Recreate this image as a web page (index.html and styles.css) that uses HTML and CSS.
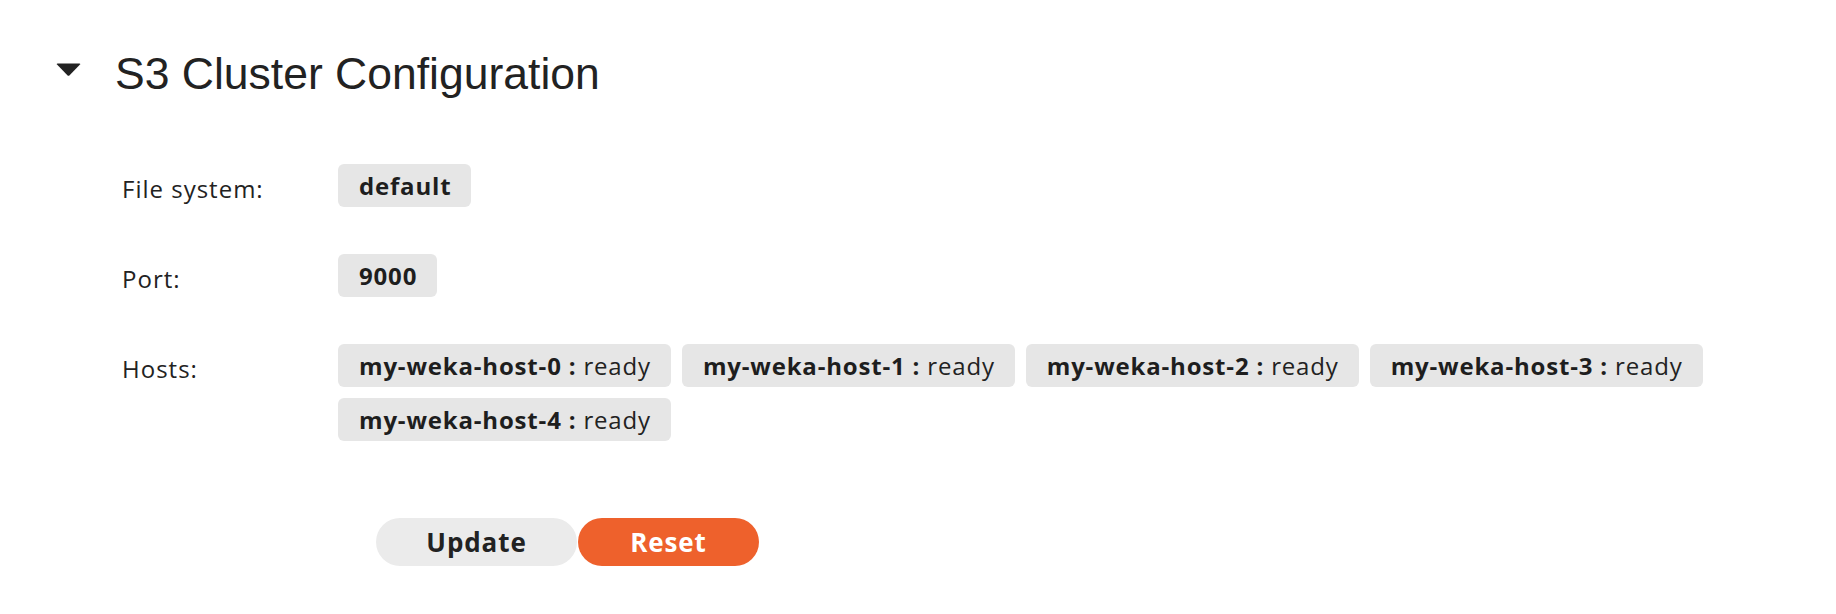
FILE: index.html
```html
<!DOCTYPE html>
<html lang="en">
<head>
<meta charset="utf-8">
<title>S3 Cluster Configuration</title>
<link rel="stylesheet" href="styles.css">
</head>
<body>
<section class="panel">
  <div class="panel-header">
    <svg class="caret" viewBox="0 0 25 13" aria-hidden="true"><path d="M1.5 0.5 H23.5 Q25 0.5 24 1.6 L13.6 12.2 Q12.5 13.2 11.4 12.2 L1 1.6 Q0 0.5 1.5 0.5 Z"/></svg>
    <h2 class="panel-title">S3 Cluster Configuration</h2>
  </div>
  <dl class="config">
    <div class="config-row">
      <dt>File system:</dt>
      <dd><span class="tag"><b>default</b></span></dd>
    </div>
    <div class="config-row">
      <dt>Port:</dt>
      <dd><span class="tag"><b>9000</b></span></dd>
    </div>
    <div class="config-row">
      <dt>Hosts:</dt>
      <dd>
        <span class="tag"><b>my-weka-host-0 :</b> ready</span>
        <span class="tag"><b>my-weka-host-1 :</b> ready</span>
        <span class="tag"><b>my-weka-host-2 :</b> ready</span>
        <span class="tag"><b>my-weka-host-3 :</b> ready</span>
        <span class="tag"><b>my-weka-host-4 :</b> ready</span>
      </dd>
    </div>
  </dl>
  <div class="actions">
    <button class="btn btn-secondary" type="button">Update</button>
    <button class="btn btn-primary" type="button">Reset</button>
  </div>
</section>
</body>
</html>
```
FILE: styles.css
```css
html, body {
  margin: 0;
  background: #ffffff;
}

body {
  font-family: "Open Sans", "Noto Sans", sans-serif;
  color: #222222;
}

.panel {
  padding: 52px 0 40px 56px;
}

.panel-header {
  display: flex;
  align-items: flex-start;
  gap: 34px;
}

.caret {
  width: 25px;
  height: 13px;
  margin-top: 11px;
  fill: #222222;
  flex: none;
}

.panel-title {
  margin: 0;
  font-family: "Liberation Sans", Arial, sans-serif;
  font-weight: 400;
  font-size: 44.5px;
  line-height: 44px;
  color: #222222;
}

.config {
  margin: 68px 0 0;
  padding-left: 66px;
  display: flex;
  flex-direction: column;
  gap: 47px;
}

.config-row {
  display: grid;
  grid-template-columns: 216px 1fr;
}

.config-row dt {
  font-size: 24px;
  line-height: 37px;
  padding-top: 6px;
  letter-spacing: 1px;
  color: #222222;
}

.config-row dd {
  margin: 0;
  display: flex;
  flex-wrap: wrap;
  gap: 11px;
}

.tag {
  display: inline-block;
  height: 43px;
  line-height: 43px;
  padding: 0 20px 0 21px;
  background: #e6e6e6;
  border-radius: 6px;
  font-size: 24px;
  letter-spacing: 0.82px;
  white-space: nowrap;
  color: #222222;
}

.tag b {
  font-weight: 700;
  color: #1e1e1e;
}

.actions {
  display: flex;
  gap: 1px;
  margin: 77px 0 0 320px;
}

.btn {
  height: 48px;
  border: 0;
  border-radius: 24px;
  padding: 0;
  font-family: "Open Sans", "Noto Sans", sans-serif;
  font-weight: 700;
  font-size: 26px;
  letter-spacing: 0.9px;
  cursor: pointer;
}

.btn-secondary {
  width: 201px;
  background: #ebebeb;
  color: #222222;
}

.btn-primary {
  width: 181px;
  background: #ee612c;
  color: #ffffff;
}
```
